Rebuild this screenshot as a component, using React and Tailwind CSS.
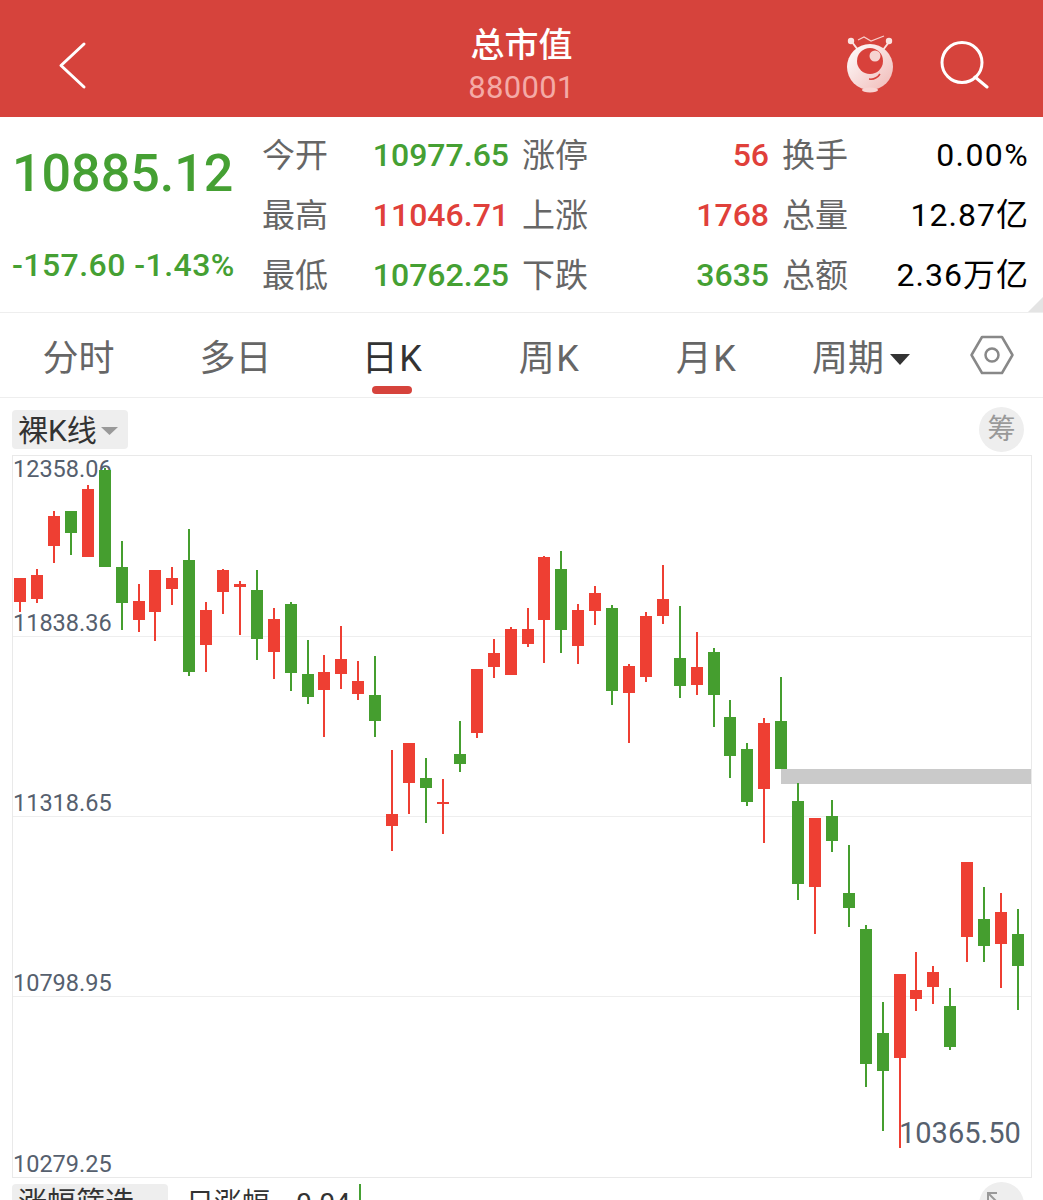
const CANDLES = [
  [20, 578, 612, 578, 602, "r"], [37, 569, 603, 575, 599, "r"], [54, 511, 563, 516, 546, "r"], [71, 511, 555, 511, 533, "g"],
  [88, 485, 557, 489, 557, "r"], [105, 468, 567, 470, 567, "g"], [122, 541, 630, 567, 603, "g"], [139, 584, 632, 601, 620, "r"],
  [155, 570, 641, 570, 612, "r"], [172, 567, 605, 578, 589, "r"], [189, 529, 676, 560, 672, "g"], [206, 602, 672, 610, 645, "r"],
  [223, 569, 614, 570, 592, "r"], [240, 581, 635, 584, 587, "r"], [257, 570, 660, 590, 639, "g"], [274, 608, 679, 619, 652, "r"],
  [291, 602, 691, 604, 673, "g"], [308, 640, 704, 674, 697, "g"], [324, 655, 737, 672, 690, "r"], [341, 626, 689, 659, 674, "r"],
  [358, 661, 700, 681, 694, "r"], [375, 656, 737, 695, 721, "g"], [392, 750, 851, 814, 826, "r"], [409, 743, 814, 743, 783, "r"],
  [426, 758, 823, 778, 788, "g"], [443, 779, 834, 802, 804, "r"], [460, 721, 772, 754, 764, "g"], [477, 669, 738, 669, 733, "r"],
  [494, 639, 678, 653, 667, "r"], [511, 627, 675, 629, 675, "r"], [528, 608, 647, 629, 644, "r"], [544, 556, 663, 557, 620, "r"],
  [561, 551, 653, 569, 630, "g"], [578, 604, 664, 610, 646, "r"], [595, 586, 625, 593, 611, "r"], [612, 605, 705, 608, 691, "g"],
  [629, 664, 743, 666, 693, "r"], [646, 612, 682, 616, 677, "r"], [663, 565, 624, 599, 616, "r"], [680, 606, 698, 658, 686, "g"],
  [697, 632, 695, 667, 685, "r"], [714, 648, 727, 652, 695, "g"], [730, 700, 778, 717, 756, "g"], [747, 743, 806, 749, 802, "g"],
  [764, 718, 843, 723, 789, "r"], [781, 677, 769, 721, 769, "g"], [798, 783, 900, 801, 884, "g"], [815, 818, 934, 818, 887, "r"],
  [832, 800, 852, 816, 841, "g"], [849, 845, 927, 893, 908, "g"], [866, 925, 1087, 929, 1064, "g"], [883, 1002, 1131, 1033, 1071, "g"],
  [900, 974, 1148, 974, 1058, "r"], [916, 952, 1011, 990, 999, "r"], [933, 966, 1004, 972, 987, "r"], [950, 988, 1050, 1006, 1047, "g"],
  [967, 862, 962, 862, 937, "r"], [984, 887, 962, 919, 946, "g"], [1001, 893, 988, 912, 944, "r"], [1018, 909, 1010, 934, 966, "g"],
];

const STATS = [
  [["今开", "10977.65", "text-[#45a033]"], ["涨停", "56", "text-[#e0403a]"], ["换手", "0.00%", "text-black font-normal tracking-[1.4px]"]],
  [["最高", "11046.71", "text-[#e0403a]"], ["上涨", "1768", "text-[#e0403a]"], ["总量", "12.87亿", "text-black font-normal tracking-[1px]"]],
  [["最低", "10762.25", "text-[#45a033]"], ["下跌", "3635", "text-[#45a033]"], ["总额", "2.36万亿", "text-black font-normal tracking-[1px]"]],
];

function Mascot() {
  return (
    <svg width="48" height="64" viewBox="845 34 48 64" fill="none">
      <defs>
        <linearGradient id="face" x1="0" y1="0" x2="1" y2="1">
          <stop offset="0" stopColor="#ffffff" />
          <stop offset="1" stopColor="#f0b9b6" />
        </linearGradient>
      </defs>
      <path d="M851 43 L857 51 M888 43 L882 51" stroke="#fbe3e1" strokeWidth="2" />
      <circle cx="850" cy="42" r="3.2" fill="#fbe3e1" />
      <circle cx="888" cy="42" r="3.2" fill="#fbe3e1" />
      <path d="M857 41 L863 38 L870 42 L883 37" stroke="#f8cfcc" strokeWidth="1.2" />
      <circle cx="869" cy="68" r="23" fill="url(#face)" />
      <circle cx="869" cy="62" r="13" fill="#d8413b" />
      <circle cx="874" cy="57" r="5.5" fill="#f6d3d1" />
      <path d="M868 80 Q875 81 879 75" stroke="#d8413b" strokeWidth="1.5" />
      <ellipse cx="869" cy="91" rx="8" ry="2.5" fill="#f8d5d3" />
    </svg>
  );
}

function Chart() {
  return (
    <svg className="absolute inset-0 w-full h-full" viewBox="13 456 1018 721">
      <rect x="781" y="769" width="250" height="15" fill="#cacaca" />
      {CANDLES.map(([x, high, low, top, bottom, c]) => (
        <g key={x} fill={c === "r" ? "#ee3f33" : "#459e2f"}>
          <rect x={x - 1} y={high} width="2" height={low - high} />
          <rect x={x - 6} y={top} width="12" height={bottom - top} />
        </g>
      ))}
    </svg>
  );
}

export default function App() {
  return (
    <div className="relative w-[1043px] h-[1200px] overflow-hidden bg-white font-['Roboto','Noto_Sans_CJK_SC',sans-serif]">
      {/* header */}
      <div className="relative h-[117px] pt-[12px] bg-[#d6433c] flex items-center justify-between">
        <svg className="ml-[56px]" width="32" height="50" viewBox="56 40 32 50" fill="none">
          <path d="M84 44 L61 65.5 L84 87" stroke="#fff" strokeWidth="3" strokeLinecap="round" strokeLinejoin="round" />
        </svg>
        <div className="absolute left-0 right-0 top-[26px] flex flex-col items-center">
          <div className="text-[34px] leading-[38px] font-medium text-white">总市值</div>
          <div className="mt-[5px] text-[31px] leading-[38px] text-[#f4aaa6] tracking-[0.3px]">880001</div>
        </div>
        <div className="flex items-center mr-[54px] gap-[45px]">
          <Mascot />
          <svg width="50" height="50" viewBox="939 40 50 50" fill="none">
            <circle cx="962" cy="62.5" r="20" stroke="#fff" strokeWidth="3" />
            <path d="M975 77 L987 87" stroke="#fff" strokeWidth="3" strokeLinecap="round" />
          </svg>
        </div>
      </div>

      {/* stats */}
      <div className="relative h-[196px] border-b border-[#eeeeee] flex">
        <div className="w-[262px] pl-3">
          <div className="pt-[23px] text-[52px] leading-[68px] font-medium text-[#45a033]">10885.12</div>
          <div className="mt-[37px] text-[32px] leading-[40px] font-medium text-[#45a033] whitespace-nowrap tracking-[0.45px]">-157.60 -1.43%</div>
        </div>
        <div className="pt-2 w-[767px] grid grid-cols-3 gap-x-[13px] auto-rows-[60px] text-[32px] font-medium">
          {STATS.flat().map(([label, value, color]) => (
            <div key={label} className="flex items-center justify-between whitespace-nowrap">
              <span className="mt-[2px] text-[#666666] text-[33px] font-normal">{label}</span>
              <span className={color}>{value}</span>
            </div>
          ))}
        </div>
        <svg className="absolute right-0 bottom-0" width="15" height="15" viewBox="0 0 15 15">
          <path d="M15 0 L15 15 L0 15 Z" fill="#e4e4e4" />
        </svg>
      </div>

      {/* tabs */}
      <div className="relative h-[85px] pt-[8px] border-b border-[#eeeeee] flex items-center text-[36px] text-[#666666]">
        <div className="w-[157px] text-center">分时</div>
        <div className="w-[157px] text-center">多日</div>
        <div className="relative w-[157px] text-center text-[#333333] tracking-[1.5px]">
          日K
          <div className="absolute left-[58px] top-[54px] w-[40px] h-[8px] rounded-full bg-[#d6433c]" />
        </div>
        <div className="w-[157px] text-center tracking-[1.5px]">周K</div>
        <div className="w-[157px] text-center tracking-[1.5px]">月K</div>
        <div className="w-[157px] flex items-center justify-center pr-[5px]">
          周期
          <svg className="ml-[6px]" width="20" height="11" viewBox="0 0 20 11">
            <path d="M0 0 L20 0 L10 11 Z" fill="#333" />
          </svg>
        </div>
        <svg className="ml-[28px] -mt-[8px]" width="44" height="40" viewBox="969 335 44 40" fill="none">
          <path d="M970.5 355 L981 337 L1001 337 L1011.5 355 L1001 373 L981 373 Z" stroke="#888" strokeWidth="2.5" strokeLinejoin="round" />
          <circle cx="991" cy="355" r="6.5" stroke="#888" strokeWidth="2.5" />
        </svg>
      </div>

      {/* toolbar */}
      <div className="h-[57px] pt-[5px] pl-3 pr-[19px] flex items-center justify-between">
        <div className="w-[116px] h-[39px] pl-[6px] pt-[3px] bg-[#eeeeee] rounded flex items-center text-[30px] text-[#333333]">
          裸K线
          <svg className="ml-[4px]" width="17" height="8" viewBox="0 0 17 8">
            <path d="M0 0 L17 0 L8.5 8 Z" fill="#999" />
          </svg>
        </div>
        <div className="w-[45px] h-[45px] pt-[2px] rounded-full bg-[#eeeeee] flex items-center justify-center text-[28px] text-[#999999]">筹</div>
      </div>

      {/* chart */}
      <div className="relative ml-3 w-[1020px] border border-[#e9e9e9] text-[23.5px] leading-[26px] text-[#56606e]">
        <div className="h-[181px] border-b border-[#eeeeee] flex flex-col justify-between">
          <div>12358.06</div>
          <div>11838.36</div>
        </div>
        <div className="h-[180px] border-b border-[#eeeeee] flex items-end">11318.65</div>
        <div className="h-[180px] border-b border-[#eeeeee] flex items-end">10798.95</div>
        <div className="h-[180px] flex items-end">10279.25</div>
        <Chart />
        <div className="absolute left-[886px] top-[662px] text-[#56606e] text-[29px] leading-[30px]">10365.50</div>
      </div>

      {/* bottom row */}
      <div className="relative mt-[6px] pl-3 flex items-start text-[#333333]">
        <div className="w-[156px] h-[40px] pl-[6px] bg-[#eeeeee] rounded flex items-center text-[29px]">涨幅筛选</div>
        <div className="ml-[18px] mt-[2px] text-[28px] leading-[36px] whitespace-nowrap">日涨幅</div>
        <div className="ml-[26px] mt-[2px] text-[28px] leading-[36px]">0.04</div>
        <div className="ml-[8px] w-[2px] h-[20px] bg-[#45a033]" />
        <div className="absolute right-[19px] -top-[2px] w-[45px] h-[45px] rounded-full bg-[#eeeeee] pl-[6px] pt-[8px]">
          <svg width="18" height="18" viewBox="0 0 18 18" fill="none">
            <path d="M3 12 L3 3 L12 3 M3 3 L15 15" stroke="#999" strokeWidth="2" />
          </svg>
        </div>
      </div>
    </div>
  );
}
